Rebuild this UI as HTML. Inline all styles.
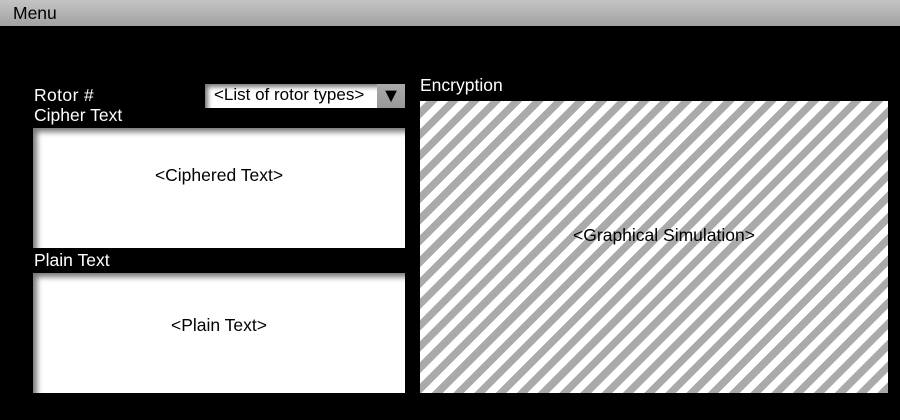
<!DOCTYPE html>
<html><head><style>
*{margin:0;padding:0;box-sizing:border-box}
body{width:900px;height:420px;background:#000;position:relative;overflow:hidden;font-family:"Liberation Sans",Arial,sans-serif}
.menu{position:absolute;left:0;top:0;width:900px;height:26px;background:linear-gradient(#c4c4c4,#a2a2a2);font-size:17.5px;color:#000;padding:3px 0 0 13px}
.lbl{position:absolute;color:#fff;font-size:17.5px}
.box{position:absolute;background:#fff;box-shadow:inset 6px 6px 6px -2px #777;display:flex;align-items:center;justify-content:center;font-size:17.5px;color:#000}
.dd{position:absolute;left:205px;top:84px;width:172px;height:24px;background:#fff;box-shadow:inset 5px 5px 5px -2px #777;font-size:17px;padding:1px 0 0 9px;white-space:nowrap}
.arr{position:absolute;left:377px;top:84px;width:28px;height:24px;background:linear-gradient(#aaa,#999);font-size:20px;text-align:center;padding-top:1px;color:#000}
.sim{position:absolute;left:420px;top:101px;width:468px;height:292px;background:repeating-linear-gradient(-45deg,#aaa 0 7.5px,#fff 7.5px 15px);display:flex;align-items:center;justify-content:center;font-size:17.5px;padding:0 0 24px 20px}
</style></head><body>
<div class="menu">Menu</div>
<div class="lbl" style="left:34px;top:85px;letter-spacing:0.4px">Rotor #</div>
<div class="lbl" style="left:34px;top:105px">Cipher Text</div>
<div class="dd">&lt;List of rotor types&gt;</div>
<div class="arr">▼</div>
<div class="box" style="left:33px;top:128px;width:372px;height:120px;padding-bottom:26px">&lt;Ciphered Text&gt;</div>
<div class="lbl" style="left:34px;top:250px">Plain Text</div>
<div class="box" style="left:33px;top:273px;width:372px;height:120px;padding-bottom:16px">&lt;Plain Text&gt;</div>
<div class="lbl" style="left:420px;top:75px">Encryption</div>
<div class="sim">&lt;Graphical Simulation&gt;</div>
</body></html>
